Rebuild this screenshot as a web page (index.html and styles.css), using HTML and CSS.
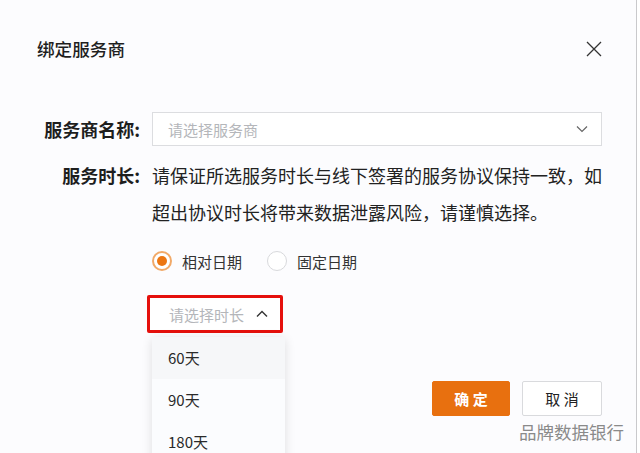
FILE: index.html
```html
<!DOCTYPE html>
<html lang="zh-CN">
<head>
<meta charset="utf-8">
<title>绑定服务商</title>
<link rel="stylesheet" href="styles.css">
</head>
<body>
<div class="dialog">
  <header class="dialog-header">
    <h1 class="dialog-title">绑定服务商</h1>
    <button class="close" aria-label="关闭">
      <svg width="16" height="16" viewBox="0 0 16 16"><path d="M1 1L15 15M15 1L1 15" stroke="#333" stroke-width="1.3" fill="none"/></svg>
    </button>
  </header>
  <div class="form">
    <div class="row row-select">
      <div class="label">服务商名称:</div>
      <div class="field">
        <div class="select">
          <span class="placeholder">请选择服务商</span>
          <svg class="chev" width="12" height="8" viewBox="0 0 12 8"><path d="M1 1.5L6 6.5L11 1.5" stroke="#666" stroke-width="1.2" fill="none"/></svg>
        </div>
      </div>
    </div>
    <div class="row row-text">
      <div class="label">服务时长:</div>
      <div class="field">
        <p class="desc">请保证所选服务时长与线下签署的服务协议保持一致，如超出协议时长将带来数据泄露风险，请谨慎选择。</p>
        <div class="radios">
          <label class="radio checked"><span class="dot"></span>相对日期</label>
          <label class="radio"><span class="dot"></span>固定日期</label>
        </div>
        <div class="dur-wrap">
          <div class="dur-select">
            <span class="placeholder">请选择时长</span>
            <svg class="chev" width="12" height="8" viewBox="0 0 12 8"><path d="M1 6.5L6 1.5L11 6.5" stroke="#333" stroke-width="1.4" fill="none"/></svg>
          </div>
          <ul class="menu">
            <li class="item active">60天</li>
            <li class="item">90天</li>
            <li class="item">180天</li>
          </ul>
        </div>
      </div>
    </div>
  </div>
  <footer class="actions">
    <button class="btn primary">确 定</button>
    <button class="btn">取 消</button>
  </footer>
  <div class="watermark">品牌数据银行</div>
</div>
</body>
</html>
```

FILE: styles.css
```css
* { box-sizing: border-box; }
html, body { margin: 0; padding: 0; }
body {
  background: #ffffff;
  font-family: "Noto Sans CJK SC", "Noto Sans", sans-serif;
  color: #222;
  overflow: hidden;
}
.dialog {
  position: relative;
  width: 637px;
  height: 453px;
  background: #fcfcfe;
  border-right: 1px solid #c9c9cc;
  padding: 0 34px 0 0;
}
.dialog-header {
  display: flex;
  align-items: center;
  justify-content: space-between;
  height: 98px;
  padding: 0 0 0 37px;
}
.dialog-title {
  margin: 0;
  font-size: 17.6px;
  font-weight: 500;
  color: #1f1f1f;
  line-height: 24px;
}
.close {
  background: none;
  border: 0;
  padding: 0;
  margin-right: 0;
  width: 16px;
  height: 16px;
  display: flex;
  cursor: pointer;
}
.form { display: flex; flex-direction: column; }
.row {
  display: grid;
  grid-template-columns: 140px 1fr;
  column-gap: 12px;
}
.label {
  text-align: right;
  font-size: 18px;
  font-weight: 700;
  color: #1e1e1e;
  white-space: nowrap;
}
.row-select { margin-top: 14px; align-items: center; }
.row-select .label { line-height: 34px; }
.select {
  height: 34px;
  border: 1px solid #dcdde0;
  background: #fff;
  display: flex;
  align-items: center;
  justify-content: space-between;
  padding: 0 13px 0 15px;
}
.placeholder { font-size: 15px; color: #b4b6ba; }
.row-text { margin-top: 11px; }
.row-text .label { line-height: 37px; }
.desc {
  margin: 0 -6px 0 0;
  font-size: 18px;
  line-height: 37px;
  color: #222;
}
.radios {
  display: flex;
  gap: 25px;
  margin-top: 19px;
  height: 22px;
  align-items: center;
}
.radio {
  display: flex;
  align-items: center;
  gap: 10px;
  font-size: 15px;
  color: #333;
}
.dot {
  width: 20px;
  height: 20px;
  border-radius: 50%;
  border: 1px solid #d8d9dc;
  background: #fff;
  display: flex;
  align-items: center;
  justify-content: center;
}
.radio.checked .dot { border: 2px solid #f1a968; }
.radio.checked .dot::after {
  content: "";
  width: 10px;
  height: 10px;
  border-radius: 50%;
  background: #ec7612;
}
.dur-wrap {
  position: relative;
  margin-top: 23px;
  margin-left: -5px;
}
.dur-select {
  width: 136px;
  height: 38px;
  border: 3px solid #e5100c;
  border-radius: 2px;
  background: #fff;
  display: flex;
  align-items: center;
  justify-content: space-between;
  padding: 0 12px 0 19px;
}
.menu {
  position: absolute;
  left: 5px;
  top: 42px;
  width: 133px;
  margin: 0;
  padding: 0;
  list-style: none;
  background: #fbfcfe;
  box-shadow: 0 2px 10px rgba(0, 0, 0, 0.12);
  z-index: 2;
}
.item {
  height: 42px;
  line-height: 42px;
  padding-left: 16px;
  font-size: 15px;
  color: #2a2a2a;
}
.item.active { background: #f6f7f9; }
.actions {
  display: flex;
  justify-content: flex-end;
  gap: 12px;
  margin-top: 48px;
}
.btn {
  width: 80px;
  height: 35px;
  border: 1px solid #d9dadd;
  border-radius: 2px;
  background: #fff;
  font-family: inherit;
  font-size: 15px;
  color: #222;
  padding: 0;
}
.btn.primary {
  width: 78px;
  background: #e8700f;
  border-color: #e8700f;
  color: #fff;
  font-weight: 700;
}
.watermark {
  position: absolute;
  right: 12px;
  bottom: 10px;
  font-size: 17.5px;
  color: #8a8a8a;
  line-height: 22px;
}
```
